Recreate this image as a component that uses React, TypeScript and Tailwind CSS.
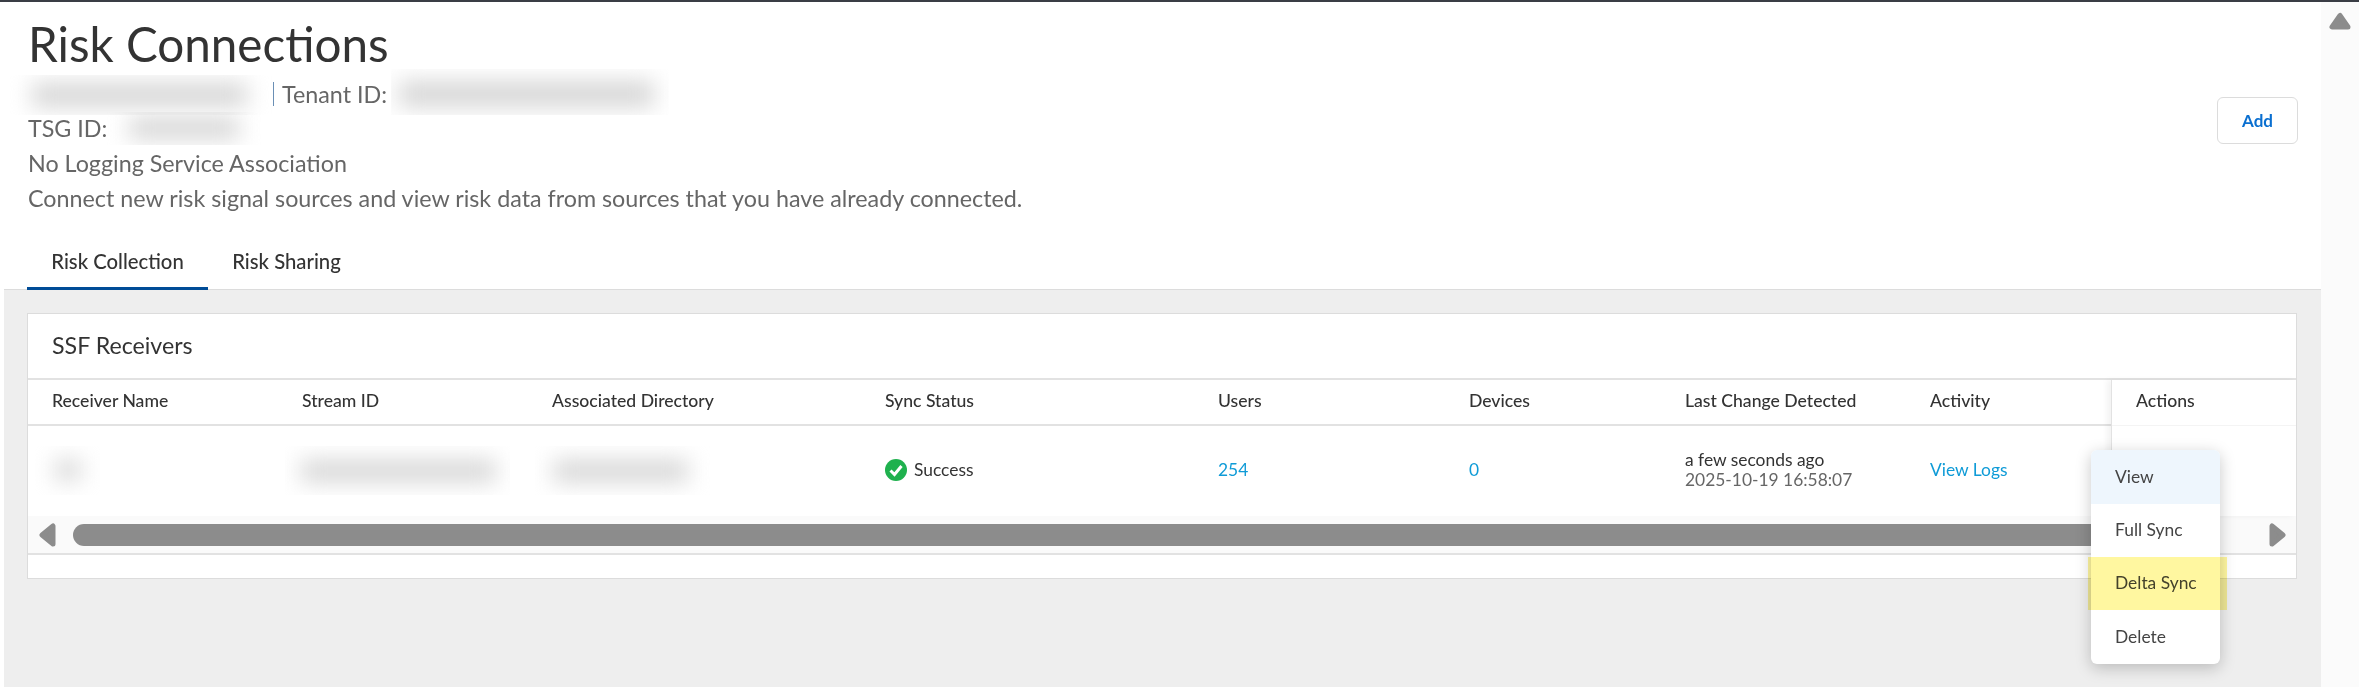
import React from 'react';

const columns = [
  { label: 'Receiver Name', width: 'w-[250px]' },
  { label: 'Stream ID', width: 'w-[250px]' },
  { label: 'Associated Directory', width: 'w-[333px]' },
  { label: 'Sync Status', width: 'w-[333px]' },
  { label: 'Users', width: 'w-[251px]' },
  { label: 'Devices', width: 'w-[216px]' },
  { label: 'Last Change Detected', width: 'w-[245px]' },
  { label: 'Activity', width: 'w-[182px]' },
];

// blurred-out values in the screenshot
const Redacted: React.FC<{ box: string; blob: string }> = ({ box, blob }) => (
  <span className={`block shrink-0 overflow-hidden bg-white ${box}`}>
    <span className={`block bg-[#d6d6d6] blur-[11px] ${blob}`}></span>
  </span>
);

const App: React.FC = () => {
  return (
    <div className="h-[687px] w-[2359px] overflow-hidden bg-white font-['Lato',sans-serif] text-[#333] flex flex-col relative">
      <div className="h-[2px] bg-[#3a3d45] shrink-0"></div>

      <div className="flex flex-1 min-h-0">
        <main className="flex-1 flex flex-col min-w-0 pl-[4px]">
          {/* Page header */}
          <div className="relative pl-[24px] h-[288px] shrink-0 border-b border-[#dcdcdc]">
            <h1 className="text-[47.6px] leading-[52px] mt-[16px] h-[52px] font-normal text-[#333]">Risk Connections</h1>
            <div className="text-[23.3px] leading-[35px] text-[#666] mt-[6px]">
              <div className="flex items-center h-[35px] -ml-[18px]">
                <Redacted box="w-[263px] h-[40px] mt-[2px]" blob="w-[215px] h-[24px] ml-[22px] mt-[8px]" />
                <span className="border-l border-[#6a8fb5] pl-[8px] leading-[24px]">Tenant ID:</span>
                <Redacted box="w-[278px] h-[46px] -mt-[4px] ml-[4px]" blob="w-[255px] h-[26px] ml-[8px] mt-[12px]" />
              </div>
              <div className="flex items-center h-[35px]">
                <span>TSG ID:</span>
                <Redacted box="w-[155px] h-[33px]" blob="w-[110px] h-[22px] ml-[22px] mt-[5px]" />
              </div>
              <div className="h-[35px]">No Logging Service Association</div>
              <div className="h-[35px]">Connect new risk signal sources and view risk data from sources that you have already connected.</div>
            </div>

            <button className="absolute right-[23px] top-[95px] w-[81px] h-[47px] rounded-[6px] border border-[#dcdcdc] bg-white text-[#0a6fd0] text-[17px] font-bold">
              Add
            </button>

            {/* Tabs */}
            <div className="absolute left-[23px] bottom-[-1px] flex text-[20.3px] font-medium text-[#333]">
              <div className="h-[48px] w-[181px] flex items-start justify-center pt-[4px] border-b-[3px] border-[#004c97]">Risk Collection</div>
              <div className="h-[48px] w-[157px] flex items-start justify-center pt-[4px]">Risk Sharing</div>
            </div>
          </div>

          {/* Content */}
          <div className="flex-1 bg-[#eeeeee] pt-[23px] pl-[23px] pr-[24px]">
            <section className="bg-white border border-[#dcdcdc] h-[266px] flex flex-col">
              <div className="h-[66px] shrink-0 pl-[24px] pb-[2px] flex items-center text-[23.2px] text-[#333] border-b-2 border-[#e2e2e2]">
                SSF Receivers
              </div>

              <div className="flex flex-1 min-h-0 flex-col relative">
                <div className="h-[46px] shrink-0 pl-[24px] pb-[2px] flex items-center border-b-2 border-[#e2e2e2] text-[17.6px] font-medium text-[#333]">
                  {columns.map((c) => (
                    <div key={c.label} className={`${c.width} shrink-0`}>{c.label}</div>
                  ))}
                </div>

                <div className="h-[90px] shrink-0 pl-[24px] pb-[2px] flex items-center text-[17.4px]">
                  <div className="w-[250px] shrink-0 -ml-[17px]">
                    <Redacted box="w-[65px] h-[49px]" blob="w-[26px] h-[20px] ml-[20px] mt-[14px]" />
                  </div>
                  <div className="w-[250px] shrink-0">
                    <Redacted box="w-[225px] h-[49px]" blob="w-[195px] h-[22px] ml-[16px] mt-[14px]" />
                  </div>
                  <div className="w-[350px] shrink-0 ">
                    <Redacted box="w-[175px] h-[49px]" blob="w-[135px] h-[22px] ml-[18px] mt-[14px]" />
                  </div>
                  <div className="w-[333px] shrink-0 flex items-center gap-[7px] text-[#333]">
                    <svg width="22" height="22" viewBox="0 0 22 22">
                      <circle cx="11" cy="11" r="11" fill="#1fb14e" />
                      <path d="M5.5 11.5 L9.5 15.5 L16.5 7" fill="none" stroke="#fff" strokeWidth="3" />
                    </svg>
                    <span>Success</span>
                  </div>
                  <div className="w-[251px] shrink-0 text-[#0f9bd7]">254</div>
                  <div className="w-[216px] shrink-0 text-[#0f9bd7]">0</div>
                  <div className="w-[245px] shrink-0 leading-[20px]">
                    <div className="text-[#333]">a few seconds ago</div>
                    <div className="text-[#666]">2025-10-19 16:58:07</div>
                  </div>
                  <div className="w-[182px] shrink-0 text-[#0f9bd7]">View Logs</div>
                </div>

                {/* Horizontal scrollbar */}
                <div className="h-[39px] shrink-0 bg-[#fafafa] border-b-2 border-[#e2e2e2] flex items-start pt-[7px] pl-[11px]">
                  <svg width="17" height="24" viewBox="0 0 17 24" className="shrink-0">
                    <path d="M14 3 V21 L3 12Z" fill="#8c8c8c" stroke="#8c8c8c" strokeWidth="5" strokeLinejoin="round" />
                  </svg>
                  <div className="ml-[17px] w-[2100px] h-[22px] mt-[1px] rounded-l-[11px] bg-[#8c8c8c] shrink-0"></div>
                  <svg width="17" height="24" viewBox="0 0 17 24" className="shrink-0 ml-[96px]">
                    <path d="M3 3 V21 L14 12Z" fill="#8c8c8c" stroke="#8c8c8c" strokeWidth="5" strokeLinejoin="round" />
                  </svg>
                </div>

                {/* Pinned actions column */}
                <div className="absolute top-0 right-0 w-[185px] h-[136px] bg-white border-l border-[#e2e2e2] shadow-[-4px_0_6px_rgba(0,0,0,0.05)]">
                  <div className="h-[46px] pb-[2px] flex items-center pl-[24px] text-[17.6px] font-medium text-[#333] border-b border-[#f4f4f4]">Actions</div>
                </div>
              </div>
            </section>
          </div>
        </main>

        {/* Page scrollbar */}
        <div className="w-[38px] shrink-0 bg-[#fbfbfb] flex justify-center pt-[10px]">
          <svg width="24" height="18" viewBox="0 0 24 18">
            <path d="M4 15 H20 L12 3.5Z" fill="#8c8c8c" stroke="#8c8c8c" strokeWidth="5" strokeLinejoin="round" />
          </svg>
        </div>
      </div>

      {/* Action menu */}
      <div className="absolute left-[2091px] top-[450px] w-[129px] h-[214px] bg-white rounded-[6px] overflow-hidden shadow-[0_4px_16px_rgba(0,0,0,0.22)] text-[17.4px] text-[#444]">
        <div className="h-[54px] pl-[24px] flex items-center bg-[#eef6fd]">View</div>
        <div className="h-[53px] pl-[24px] flex items-center">Full Sync</div>
        <div className="h-[53px] pl-[24px] flex items-center">Delta Sync</div>
        <div className="h-[54px] pl-[24px] flex items-center">Delete</div>
      </div>
      {/* Yellow highlight drawn over the screenshot */}
      <div className="absolute left-[2088px] top-[557px] w-[139px] h-[53px] bg-[#fff7a0] mix-blend-multiply"></div>
    </div>
  );
};

export default App;
